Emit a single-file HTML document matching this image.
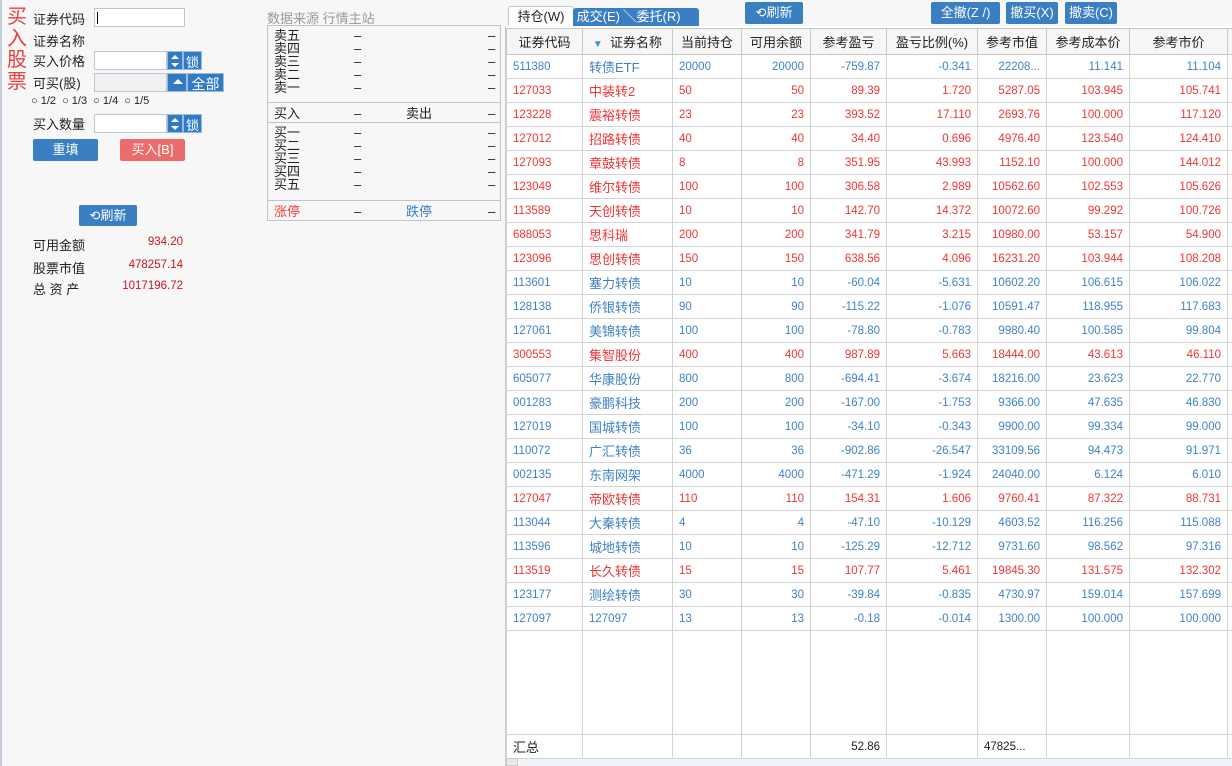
<!DOCTYPE html>
<html><head><meta charset="utf-8"><style>
*{margin:0;padding:0;box-sizing:border-box}
body{width:1232px;height:766px;background:#f7f7f7;font-family:"Liberation Sans","Noto Sans CJK SC",sans-serif;font-size:13px;color:#222;position:relative;overflow:hidden}
.a{position:absolute;white-space:nowrap}
.btn{position:absolute;background:#3a7fc1;color:#fff;text-align:center;border-radius:2px;font-size:13px}
.inp{position:absolute;background:#fff;border:1px solid #b9c6d6}
.spin{position:absolute;background:#2f7bc4;border:1px solid #9fb9d6}
.lock{position:absolute;background:#2f7bc4;color:#fff;font-size:13px;text-align:center;border:1px solid #9fb9d6}
table{position:absolute;left:506px;top:28px;width:732px;border-collapse:collapse;table-layout:fixed;background:#fff}
td{border:1px solid #d4d4d4;height:24px;font-size:11.5px;padding:0 6px;white-space:nowrap;overflow:hidden}
th{border:1px solid #c8c8c8;height:26px;font-weight:normal;font-size:13px;background:#f6f6f6;color:#222}
td.r{text-align:right}
td.n{font-size:13px}
tr.b td{color:#3f82c4}
tr.d td{color:#ee3535}
.q{position:absolute;left:6px;font-size:13px;line-height:13px}
</style></head><body>
<div class="a" style="left:0;top:0;width:2px;height:766px;background:#c5cfdd"></div>
<div class="a" style="left:7px;top:7px;color:#e84040;font-size:20px;line-height:21.5px;width:22px;white-space:normal">买入股票</div>
<div class="a" style="left:33px;top:9px">证券代码</div>
<div class="inp" style="left:94px;top:8px;width:91px;height:19px"><div style="position:absolute;left:2px;top:3px;width:1px;height:12px;background:#000"></div></div>
<div class="a" style="left:33px;top:31px">证券名称</div>
<div class="a" style="left:33px;top:51px">买入价格</div>
<div class="inp" style="left:94px;top:51px;width:73px;height:19px"></div>
<div class="spin" style="left:167px;top:51px;width:16px;height:19px"><div style="position:absolute;left:3px;top:3px;border:4px solid transparent;border-bottom:4px solid #fff;border-top:0"></div><div style="position:absolute;left:3px;top:11px;border:4px solid transparent;border-top:4px solid #fff;border-bottom:0"></div></div>
<div class="lock" style="left:183px;top:51px;width:19px;height:19px">锁</div>
<div class="a" style="left:33px;top:73px">可买(股)</div>
<div class="inp" style="left:94px;top:73px;width:73px;height:19px;background:#f0f0f0"></div>
<div class="spin" style="left:167px;top:73px;width:20px;height:19px"><div style="position:absolute;left:5px;top:5px;border:5px solid transparent;border-bottom:5px solid #fff;border-top:0"></div></div>
<div class="lock" style="left:187px;top:73px;width:37px;height:19px;font-size:14px">全部</div>
<div class="a" style="left:31px;top:95px;font-size:11px;color:#222">○ 1/2 &nbsp;○ 1/3 &nbsp;○ 1/4 &nbsp;○ 1/5</div>
<div class="a" style="left:33px;top:114px">买入数量</div>
<div class="inp" style="left:94px;top:114px;width:73px;height:19px"></div>
<div class="spin" style="left:167px;top:114px;width:16px;height:19px"><div style="position:absolute;left:3px;top:3px;border:4px solid transparent;border-bottom:4px solid #fff;border-top:0"></div><div style="position:absolute;left:3px;top:11px;border:4px solid transparent;border-top:4px solid #fff;border-bottom:0"></div></div>
<div class="lock" style="left:183px;top:114px;width:19px;height:19px">锁</div>
<div class="btn" style="left:33px;top:139px;width:65px;height:22px;line-height:22px">重填</div>
<div class="btn" style="left:120px;top:139px;width:65px;height:22px;line-height:22px;background:#ea6c6c">买入[B]</div>
<div class="btn" style="left:79px;top:205px;width:58px;height:21px;line-height:21px">⟲刷新</div>
<div class="a" style="left:33px;top:235px">可用金额</div><div class="a" style="left:120px;top:236px;width:63px;text-align:right;color:#c8161d;font-size:11.5px">934.20</div>
<div class="a" style="left:33px;top:258px">股票市值</div><div class="a" style="left:110px;top:259px;width:73px;text-align:right;color:#c8161d;font-size:11.5px">478257.14</div>
<div class="a" style="left:33px;top:279px">总 资 产</div><div class="a" style="left:100px;top:280px;width:83px;text-align:right;color:#c8161d;font-size:11.5px">1017196.72</div>

<div class="a" style="left:267px;top:8px;color:#999">数据来源 行情主站</div>
<div class="a" style="left:267px;top:25px;width:234px;height:196px;border:1px solid #b9c6d6;background:#f7f7f7">
 <div class="q" style="top:3px">卖五<br>卖四<br>卖三<br>卖二<br>卖一</div>
 <div class="q" style="left:86px;top:3px">–<br>–<br>–<br>–<br>–</div>
 <div class="q" style="left:220px;top:3px">–<br>–<br>–<br>–<br>–</div>
 <div style="position:absolute;left:0;right:0;top:76px;height:21px;border-top:1px solid #b9c6d6;border-bottom:1px solid #b9c6d6"></div>
 <div class="q" style="top:81px">买入</div><div class="q" style="left:86px;top:81px">–</div><div class="q" style="left:138px;top:81px">卖出</div><div class="q" style="left:220px;top:81px">–</div>
 <div class="q" style="top:100px">买一<br>买二<br>买三<br>买四<br>买五</div>
 <div class="q" style="left:86px;top:100px">–<br>–<br>–<br>–<br>–</div>
 <div class="q" style="left:220px;top:100px">–<br>–<br>–<br>–<br>–</div>
 <div style="position:absolute;left:0;right:0;top:174px;border-top:1px solid #b9c6d6"></div>
 <div class="q" style="top:179px;color:#f04040">涨停</div><div class="q" style="left:86px;top:179px">–</div><div class="q" style="left:138px;top:179px;color:#3a7fc1">跌停</div><div class="q" style="left:220px;top:179px">–</div>
</div>

<div class="a" style="left:508px;top:6px;width:66px;height:22px;background:#fff;border:1px solid #b9c6d6;border-bottom:none;border-radius:3px 3px 0 0;text-align:center;line-height:20px">持仓(W)</div>
<div class="a" style="left:573px;top:8px;width:126px;height:18px;background:#3a7fc1;color:#fff;line-height:18px;border-radius:3px 3px 0 0">&nbsp;成交(E)&nbsp;╲委托(R)</div>
<div class="btn" style="left:745px;top:2px;width:58px;height:22px;line-height:22px">⟲刷新</div>
<div class="btn" style="left:931px;top:2px;width:69px;height:22px;line-height:22px">全撤(Z /)</div>
<div class="btn" style="left:1006px;top:2px;width:52px;height:22px;line-height:22px">撤买(X)</div>
<div class="btn" style="left:1065px;top:2px;width:52px;height:22px;line-height:22px">撤卖(C)</div>

<div class="a" style="left:505px;top:26px;width:727px;height:740px;background:#fff;border-left:1px solid #c8c8c8"></div>
<table>
<colgroup><col style="width:76px"><col style="width:90px"><col style="width:69px"><col style="width:69px"><col style="width:76px"><col style="width:91px"><col style="width:69px"><col style="width:83px"><col style="width:98px"><col style="width:11px"></colgroup>
<tr><th>证券代码</th><th><span style="color:#3a8fd8;font-size:10px">▼</span>&nbsp; 证券名称</th><th>当前持仓</th><th>可用余额</th><th>参考盈亏</th><th>盈亏比例(%)</th><th>参考市值</th><th>参考成本价</th><th>参考市价</th><th></th></tr>
<tr class="b"><td>511380</td><td class="n">转债ETF</td><td>20000</td><td class="r">20000</td><td class="r">-759.87</td><td class="r">-0.341</td><td class="r">22208...</td><td class="r">11.141</td><td class="r">11.104</td><td></td></tr>
<tr class="d"><td>127033</td><td class="n">中装转2</td><td>50</td><td class="r">50</td><td class="r">89.39</td><td class="r">1.720</td><td class="r">5287.05</td><td class="r">103.945</td><td class="r">105.741</td><td></td></tr>
<tr class="d"><td>123228</td><td class="n">震裕转债</td><td>23</td><td class="r">23</td><td class="r">393.52</td><td class="r">17.110</td><td class="r">2693.76</td><td class="r">100.000</td><td class="r">117.120</td><td></td></tr>
<tr class="d"><td>127012</td><td class="n">招路转债</td><td>40</td><td class="r">40</td><td class="r">34.40</td><td class="r">0.696</td><td class="r">4976.40</td><td class="r">123.540</td><td class="r">124.410</td><td></td></tr>
<tr class="d"><td>127093</td><td class="n">章鼓转债</td><td>8</td><td class="r">8</td><td class="r">351.95</td><td class="r">43.993</td><td class="r">1152.10</td><td class="r">100.000</td><td class="r">144.012</td><td></td></tr>
<tr class="d"><td>123049</td><td class="n">维尔转债</td><td>100</td><td class="r">100</td><td class="r">306.58</td><td class="r">2.989</td><td class="r">10562.60</td><td class="r">102.553</td><td class="r">105.626</td><td></td></tr>
<tr class="d"><td>113589</td><td class="n">天创转债</td><td>10</td><td class="r">10</td><td class="r">142.70</td><td class="r">14.372</td><td class="r">10072.60</td><td class="r">99.292</td><td class="r">100.726</td><td></td></tr>
<tr class="d"><td>688053</td><td class="n">思科瑞</td><td>200</td><td class="r">200</td><td class="r">341.79</td><td class="r">3.215</td><td class="r">10980.00</td><td class="r">53.157</td><td class="r">54.900</td><td></td></tr>
<tr class="d"><td>123096</td><td class="n">思创转债</td><td>150</td><td class="r">150</td><td class="r">638.56</td><td class="r">4.096</td><td class="r">16231.20</td><td class="r">103.944</td><td class="r">108.208</td><td></td></tr>
<tr class="b"><td>113601</td><td class="n">塞力转债</td><td>10</td><td class="r">10</td><td class="r">-60.04</td><td class="r">-5.631</td><td class="r">10602.20</td><td class="r">106.615</td><td class="r">106.022</td><td></td></tr>
<tr class="b"><td>128138</td><td class="n">侨银转债</td><td>90</td><td class="r">90</td><td class="r">-115.22</td><td class="r">-1.076</td><td class="r">10591.47</td><td class="r">118.955</td><td class="r">117.683</td><td></td></tr>
<tr class="b"><td>127061</td><td class="n">美锦转债</td><td>100</td><td class="r">100</td><td class="r">-78.80</td><td class="r">-0.783</td><td class="r">9980.40</td><td class="r">100.585</td><td class="r">99.804</td><td></td></tr>
<tr class="d"><td>300553</td><td class="n">集智股份</td><td>400</td><td class="r">400</td><td class="r">987.89</td><td class="r">5.663</td><td class="r">18444.00</td><td class="r">43.613</td><td class="r">46.110</td><td></td></tr>
<tr class="b"><td>605077</td><td class="n">华康股份</td><td>800</td><td class="r">800</td><td class="r">-694.41</td><td class="r">-3.674</td><td class="r">18216.00</td><td class="r">23.623</td><td class="r">22.770</td><td></td></tr>
<tr class="b"><td>001283</td><td class="n">豪鹏科技</td><td>200</td><td class="r">200</td><td class="r">-167.00</td><td class="r">-1.753</td><td class="r">9366.00</td><td class="r">47.635</td><td class="r">46.830</td><td></td></tr>
<tr class="b"><td>127019</td><td class="n">国城转债</td><td>100</td><td class="r">100</td><td class="r">-34.10</td><td class="r">-0.343</td><td class="r">9900.00</td><td class="r">99.334</td><td class="r">99.000</td><td></td></tr>
<tr class="b"><td>110072</td><td class="n">广汇转债</td><td>36</td><td class="r">36</td><td class="r">-902.86</td><td class="r">-26.547</td><td class="r">33109.56</td><td class="r">94.473</td><td class="r">91.971</td><td></td></tr>
<tr class="b"><td>002135</td><td class="n">东南网架</td><td>4000</td><td class="r">4000</td><td class="r">-471.29</td><td class="r">-1.924</td><td class="r">24040.00</td><td class="r">6.124</td><td class="r">6.010</td><td></td></tr>
<tr class="d"><td>127047</td><td class="n">帝欧转债</td><td>110</td><td class="r">110</td><td class="r">154.31</td><td class="r">1.606</td><td class="r">9760.41</td><td class="r">87.322</td><td class="r">88.731</td><td></td></tr>
<tr class="b"><td>113044</td><td class="n">大秦转债</td><td>4</td><td class="r">4</td><td class="r">-47.10</td><td class="r">-10.129</td><td class="r">4603.52</td><td class="r">116.256</td><td class="r">115.088</td><td></td></tr>
<tr class="b"><td>113596</td><td class="n">城地转债</td><td>10</td><td class="r">10</td><td class="r">-125.29</td><td class="r">-12.712</td><td class="r">9731.60</td><td class="r">98.562</td><td class="r">97.316</td><td></td></tr>
<tr class="d"><td>113519</td><td class="n">长久转债</td><td>15</td><td class="r">15</td><td class="r">107.77</td><td class="r">5.461</td><td class="r">19845.30</td><td class="r">131.575</td><td class="r">132.302</td><td></td></tr>
<tr class="b"><td>123177</td><td class="n">测绘转债</td><td>30</td><td class="r">30</td><td class="r">-39.84</td><td class="r">-0.835</td><td class="r">4730.97</td><td class="r">159.014</td><td class="r">157.699</td><td></td></tr>
<tr class="b"><td>127097</td><td>127097</td><td>13</td><td class="r">13</td><td class="r">-0.18</td><td class="r">-0.014</td><td class="r">1300.00</td><td class="r">100.000</td><td class="r">100.000</td><td></td></tr>
<tr><td style="height:104px"></td><td></td><td></td><td></td><td></td><td></td><td></td><td></td><td></td><td></td></tr>
<tr><td class="n">汇总</td><td></td><td></td><td></td><td class="r">52.86</td><td></td><td>47825...</td><td></td><td></td><td></td></tr>
</table>
<div class="a" style="left:506px;top:758px;width:726px;height:8px;background:#f0f4f8;border-top:1px solid #d4d4d4"></div>
<div class="a" style="left:506px;top:758px;width:12px;height:8px;background:#e8e8e8;border:1px solid #ccc"></div>
</body></html>
